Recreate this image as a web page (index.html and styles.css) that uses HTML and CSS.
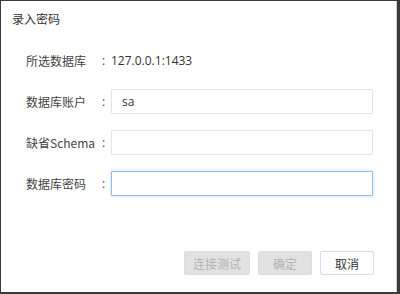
FILE: index.html
```html
<!DOCTYPE html>
<html lang="zh-CN">
<head>
<meta charset="utf-8">
<title>录入密码</title>
<link rel="stylesheet" href="styles.css">
</head>
<body>
<div class="window">
  <div class="title">录入密码</div>
  <div class="form">
    <div class="label">所选数据库</div><div class="colon">:</div><div class="value">127.0.0.1:1433</div>
    <div class="label">数据库账户</div><div class="colon">:</div><input class="field" type="text" value="sa">
    <div class="label">缺省Schema</div><div class="colon">:</div><input class="field" type="text" value="">
    <div class="label">数据库密码</div><div class="colon">:</div><input class="field focus" type="password" value="">
  </div>
  <div class="actions">
    <button class="btn disabled btn-wide">连接测试</button>
    <button class="btn disabled">确定</button>
    <button class="btn">取消</button>
  </div>
</div>
</body>
</html>
```

FILE: styles.css
```css
html, body {
  margin: 0;
  padding: 0;
  background: #ffffff;
}
body {
  width: 400px;
  height: 294px;
  overflow: hidden;
  font-family: "Noto Sans CJK SC", "Open Sans", sans-serif;
  font-size: 12px;
  color: #333333;
}
.window {
  box-sizing: border-box;
  width: 400px;
  height: 294px;
  border-top: 1px solid #3a3a3a;
  border-left: 1px solid #3a3a3a;
  border-right: 3px solid #3a3a3a;
  border-bottom: 2px solid #3a3a3a;
  box-shadow: inset -1px 0 0 #d4d4d4;
  display: flex;
  flex-direction: column;
}
.title {
  padding: 9px 0 0 11px;
  height: 25px;
  line-height: 17px;
  font-size: 12px;
  color: #333;
}
.form {
  margin-top: 13px;
  padding-left: 25px;
  display: grid;
  grid-template-columns: 76px 9px 262px;
  grid-auto-rows: 25px;
  row-gap: 16px;
  align-items: center;
}
.label {
  font-size: 12px;
  color: #444;
  line-height: 25px;
}
.colon {
  font-family: "Open Sans", sans-serif;
  font-size: 12px;
  color: #444;
  line-height: 25px;
}
.value {
  font-family: "Open Sans", "Noto Sans CJK SC", sans-serif;
  font-size: 12px;
  color: #333;
  line-height: 25px;
}
.field {
  box-sizing: border-box;
  width: 262px;
  height: 25px;
  margin: 0;
  padding: 0 10px;
  border: 1px solid #e3e3e3;
  border-radius: 1px;
  background: #fff;
  font-family: "Open Sans", "Noto Sans CJK SC", sans-serif;
  font-size: 12px;
  color: #333;
  outline: none;
}
.field.focus {
  border-color: #92bdeb;
  box-shadow: 0 0 3px rgba(120, 170, 230, 0.5);
}
.actions {
  margin-top: auto;
  margin-bottom: 17px;
  padding-right: 23px;
  display: flex;
  justify-content: flex-end;
  gap: 8px;
}
.btn {
  box-sizing: border-box;
  width: 54px;
  height: 24px;
  margin: 0;
  padding: 0;
  border: 1px solid #dddddd;
  border-radius: 2px;
  background: #ffffff;
  font-family: "Noto Sans CJK SC", sans-serif;
  font-size: 12px;
  color: #333;
}
.btn-wide {
  width: 66px;
}
.btn.disabled {
  background: #e2e2e2;
  border-color: #dcdcdc;
  color: #b3b3b3;
}
```
